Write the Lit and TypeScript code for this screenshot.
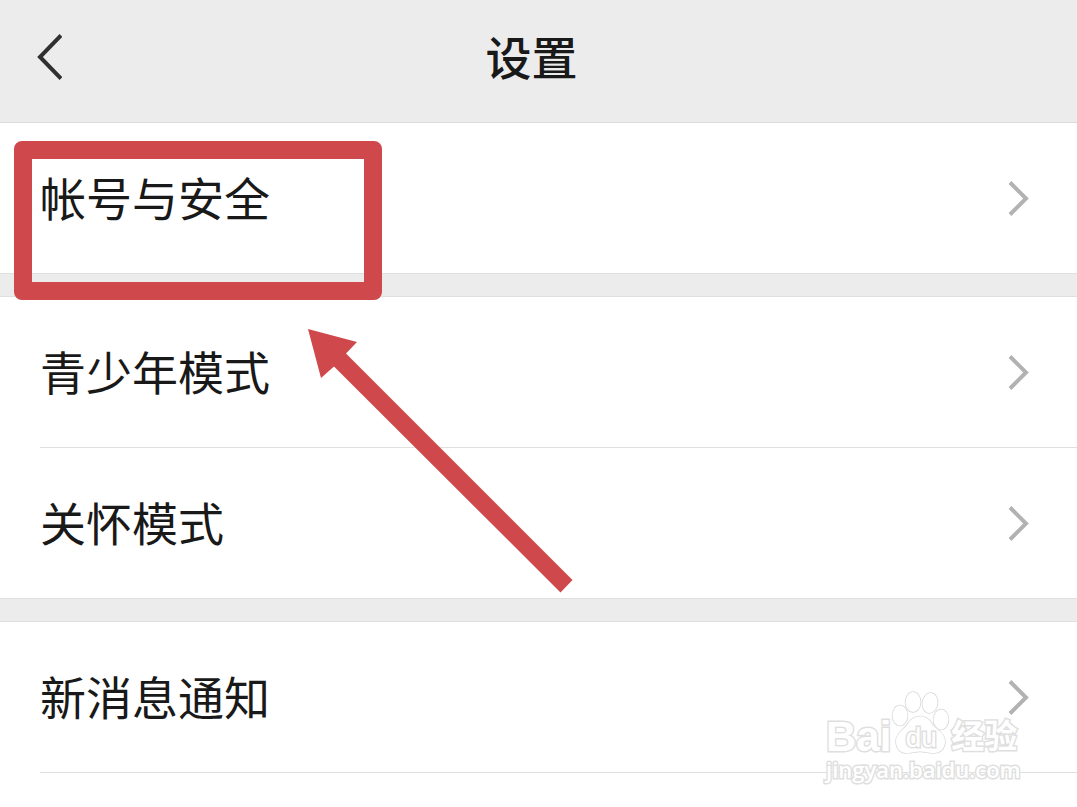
import { LitElement, html, css } from "lit";
import { customElement, property } from "lit/decorators.js";

@customElement("settings-row")
class SettingsRow extends LitElement {
  @property() label = "";

  static styles = css`
    :host {
      display: block;
    }
    .row {
      display: flex;
      align-items: center;
      justify-content: space-between;
      width: 100%;
      box-sizing: border-box;
      margin: 0;
      padding: 40px 48px 40px 40px;
      border: 0;
      background: none;
      color: #191919;
      font: inherit;
      font-size: 46px;
      line-height: 66px;
      text-align: left;
      cursor: pointer;
    }
    .label {
      padding-bottom: 4px;
    }
    .chevron {
      flex: none;
      width: 22px;
      height: 36px;
    }
  `;

  render() {
    return html`
      <button class="row" type="button">
        <span class="label">${this.label}</span>
        <svg class="chevron" viewBox="0 0 22 36" aria-hidden="true">
          <path d="M3 2.500 19 18.500 3 34.500" fill="none" stroke="#b2b2b2" stroke-width="4" />
        </svg>
      </button>
    `;
  }
}

@customElement("brand-watermark")
class BrandWatermark extends LitElement {
  static styles = css`
    :host {
      display: block;
      width: 194px;
      pointer-events: none;
      color: #fff;
      font-family: "Liberation Sans", "Noto Sans CJK SC", sans-serif;
      -webkit-text-stroke: 3px #dfdfdf;
      paint-order: stroke fill;
    }
    .logo {
      display: flex;
      align-items: flex-end;
    }
    .bai {
      font-size: 42px;
      font-weight: 700;
      line-height: 34px;
    }
    .paw {
      position: relative;
      width: 60px;
      height: 64px;
    }
    .paw svg {
      display: block;
      width: 60px;
      height: 64px;
    }
    .du {
      position: absolute;
      left: 0;
      right: 0;
      bottom: 2px;
      text-align: center;
      font-size: 28px;
      line-height: 28px;
    }
    .jingyan {
      font-family: "Noto Sans CJK SC", sans-serif;
      font-size: 33px;
      font-weight: 700;
      line-height: 40px;
    }
    .site {
      font-family: "Open Sans", "Noto Sans", sans-serif;
      font-size: 22px;
      font-weight: 600;
      line-height: 30px;
    }
  `;

  render() {
    return html`
      <div class="logo">
        <span class="bai">Bai</span>
        <div class="paw">
          <svg viewBox="0 0 60 64" aria-hidden="true">
            <g fill="#fff" stroke="#dadada" stroke-width="1.6">
              <ellipse cx="9" cy="25.500" rx="7.500" ry="10" />
              <ellipse cx="22" cy="12" rx="7.500" ry="10" />
              <ellipse cx="39" cy="13" rx="7.500" ry="10" transform="rotate(8 39 13)" />
              <ellipse cx="50" cy="29.500" rx="7.500" ry="10" />
              <path
                d="M29 26.500C34 26.500 38 29 40.500 33C44 39 54 43 54 51C54 59 49 63 43 63C37 63 34 61.500 29 61.500C24 61.500 21 63 15 63C9 63 5 58 5 51C5 43 14 39 17.500 33C20 29 24 26.500 29 26.500Z"
              />
            </g>
          </svg>
          <span class="du">du</span>
        </div>
        <span class="jingyan">经验</span>
      </div>
      <div class="site">jingyan.baidu.com</div>
    `;
  }
}

@customElement("app-root")
class AppRoot extends LitElement {
  static styles = css`
    :host {
      position: relative;
      display: flex;
      flex-direction: column;
      min-height: 100vh;
      overflow: hidden;
      background: #ececec;
      color: #191919;
      font-family: "Noto Sans CJK SC", sans-serif;
    }
    .bar {
      display: grid;
      grid-template-columns: 62px 1fr 76px;
      align-items: center;
      padding: 22px 0 30px;
      border-bottom: 1px solid #dcdcdc;
    }
    .back {
      display: flex;
      justify-content: flex-end;
      margin: 0;
      padding: 0;
      border: 0;
      background: none;
      cursor: pointer;
    }
    .back svg {
      width: 28px;
      height: 48px;
    }
    .title {
      margin: 0;
      padding-bottom: 4px;
      text-align: center;
      font-size: 46px;
      font-weight: 500;
      line-height: 66px;
    }
    .content {
      display: flex;
      flex: 1;
      flex-direction: column;
      gap: 22px;
    }
    .group {
      margin: 0;
      padding: 0;
      list-style: none;
      background: #fff;
      border-bottom: 1px solid #dfdfdf;
    }
    .group + .group {
      border-top: 1px solid #dfdfdf;
    }
    .group:last-child {
      flex: 1;
      border-bottom: 0;
    }
    .item {
      position: relative;
    }
    .item + .item::before,
    .open::after {
      content: "";
      display: block;
      height: 1px;
      margin-left: 40px;
      background: #e0e0e0;
    }
    .frame {
      position: absolute;
      z-index: 1;
      top: 18px;
      left: 14px;
      width: 332px;
      height: 123px;
      border: 18px solid #cf484b;
      border-radius: 8px;
      pointer-events: none;
    }
    .arrow {
      position: absolute;
      top: 328px;
      left: 307px;
      width: 266px;
      height: 265px;
      pointer-events: none;
    }
    .mark {
      position: absolute;
      top: 690px;
      right: 57px;
    }
  `;

  render() {
    return html`
      <header class="bar">
        <button class="back" type="button" aria-label="返回">
          <svg viewBox="0 0 28 48" aria-hidden="true">
            <path d="M27 2.500 6 24 27 45.500" fill="none" stroke="#303030" stroke-width="4" />
          </svg>
        </button>
        <h1 class="title">设置</h1>
      </header>
      <main class="content">
        <ul class="group">
          <li class="item">
            <settings-row label="帐号与安全"></settings-row>
            <div class="frame"></div>
          </li>
        </ul>
        <ul class="group">
          <li class="item"><settings-row label="青少年模式"></settings-row></li>
          <li class="item"><settings-row label="关怀模式"></settings-row></li>
        </ul>
        <ul class="group">
          <li class="item open"><settings-row label="新消息通知"></settings-row></li>
        </ul>
      </main>
      <svg class="arrow" viewBox="0 0 266 265" aria-hidden="true">
        <path d="M1 1 50 14 39 25.500 265.500 252 253.500 264.500 27 38.500 14 50Z" fill="#cf484b" />
      </svg>
      <brand-watermark class="mark"></brand-watermark>
    `;
  }
}
